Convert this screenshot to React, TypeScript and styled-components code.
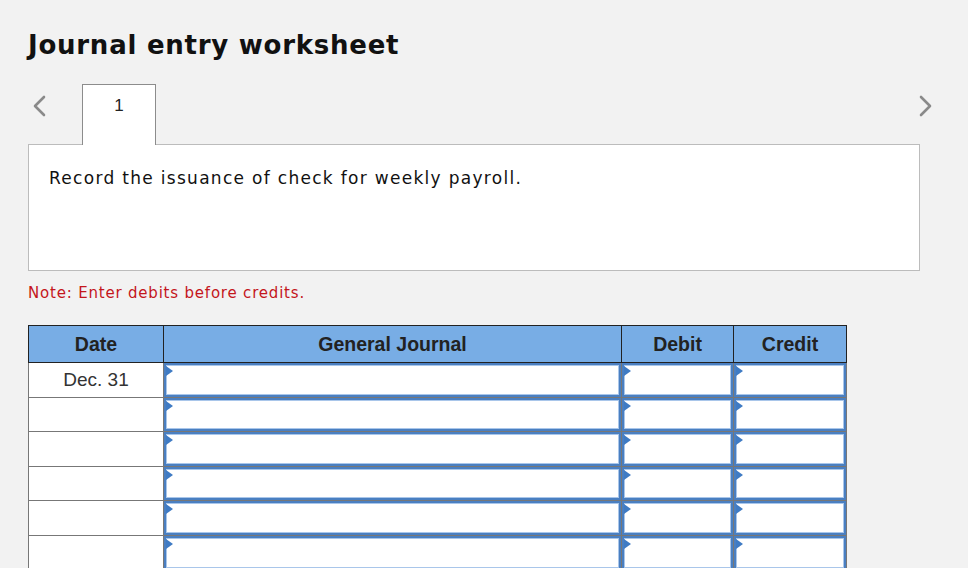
import styled, { createGlobalStyle } from "styled-components";

const GlobalStyle = createGlobalStyle`
  html, body {
    margin: 0;
    background: #f2f2f2;
  }
`;

const Page = styled.main`
  padding: 29px 0 0 28px;
  font-family: "DejaVu Sans", Verdana, sans-serif;
`;

const Title = styled.h1`
  margin: 0;
  font-size: 26px;
  line-height: 32px;
  font-weight: 700;
  letter-spacing: 0.75px;
  color: #111;
`;

const TabRow = styled.div`
  display: flex;
  align-items: flex-start;
  width: 904px;
  margin-top: 23px;
`;

const Arrow = styled.button<{ $right?: boolean }>`
  border: 0;
  background: none;
  padding: 0;
  margin: 11px ${(p) => (p.$right ? "0" : "35px")} 0 ${(p) => (p.$right ? "auto" : "5px")};
  width: 14px;
  height: 22px;
  color: #8a8a8a;
  display: flex;
  align-items: center;
  justify-content: center;
`;

const Tab = styled.div`
  position: relative;
  z-index: 1;
  width: 74px;
  height: 61px;
  margin-bottom: -1px;
  box-sizing: border-box;
  background: #fff;
  border: 1px solid #8c8c8c;
  border-bottom: 0;
  text-align: center;
  padding-top: 11px;
  font-family: "Liberation Sans", Arial, sans-serif;
  font-size: 17px;
  color: #222;
`;

const Panel = styled.section`
  width: 892px;
  height: 127px;
  box-sizing: border-box;
  background: #fff;
  border: 1px solid #bcbcbc;
  padding: 21px 20px;
  font-size: 17px;
  line-height: 24px;
  letter-spacing: 1.3px;
  color: #111;
`;

const Note = styled.p`
  margin: 13px 0 0;
  font-size: 15px;
  line-height: 18px;
  letter-spacing: 0.8px;
  color: #c4161c;
`;

const Table = styled.table`
  margin-top: 23px;
  border-collapse: collapse;
  table-layout: fixed;
  width: 818px;
  font-family: "Liberation Sans", Arial, sans-serif;
`;

const HeadCell = styled.th<{ $w: number }>`
  width: ${(p) => p.$w}px;
  height: 36px;
  padding: 0;
  background: #78ade5;
  border: 1px solid #222;
  font-size: 19.5px;
  font-weight: 700;
  color: #222;
  text-align: center;
`;

const Row = styled.tr`
  height: 34.6px;
`;

const DateCell = styled.td`
  border: 1px solid #777;
  background: #fff;
  padding: 0;
  text-align: center;
  font-size: 19px;
  color: #333;
`;

const InputCell = styled.td`
  border: 1px solid #777;
  background: #fff;
  padding: 0;
  height: 33px;
`;

const Field = styled.div`
  position: relative;
  height: 100%;
  box-sizing: border-box;
  border: 2px solid #4a7fc1;
  box-shadow: inset 0 0 0 1px #a9c6ea;
  background: #fff;

  &::before {
    content: "";
    position: absolute;
    left: 0;
    top: 1px;
    border-left: 7px solid #3f7bc4;
    border-top: 5px solid transparent;
    border-bottom: 5px solid transparent;
  }
`;

const rows = ["Dec. 31", "", "", "", "", ""];

const Chevron = ({ right }: { right?: boolean }) => (
  <svg width="14" height="22" viewBox="0 0 14 22" fill="none">
    <path
      d={right ? "M3 2 L12 11 L3 20" : "M11 2 L2 11 L11 20"}
      stroke="currentColor"
      strokeWidth="2.6"
      strokeLinecap="round"
      strokeLinejoin="round"
    />
  </svg>
);

export default function App() {
  return (
    <>
      <GlobalStyle />
      <Page>
        <Title>Journal entry worksheet</Title>
        <TabRow>
          <Arrow aria-label="Previous">
            <Chevron />
          </Arrow>
          <Tab>1</Tab>
          <Arrow $right aria-label="Next">
            <Chevron right />
          </Arrow>
        </TabRow>
        <Panel>Record the issuance of check for weekly payroll.</Panel>
        <Note>Note: Enter debits before credits.</Note>
        <Table>
          <thead>
            <tr>
              <HeadCell $w={134}>Date</HeadCell>
              <HeadCell $w={457}>General Journal</HeadCell>
              <HeadCell $w={111}>Debit</HeadCell>
              <HeadCell $w={112}>Credit</HeadCell>
            </tr>
          </thead>
          <tbody>
            {rows.map((d, i) => (
              <Row key={i}>
                <DateCell>{d}</DateCell>
                <InputCell>
                  <Field />
                </InputCell>
                <InputCell>
                  <Field />
                </InputCell>
                <InputCell>
                  <Field />
                </InputCell>
              </Row>
            ))}
          </tbody>
        </Table>
      </Page>
    </>
  );
}
